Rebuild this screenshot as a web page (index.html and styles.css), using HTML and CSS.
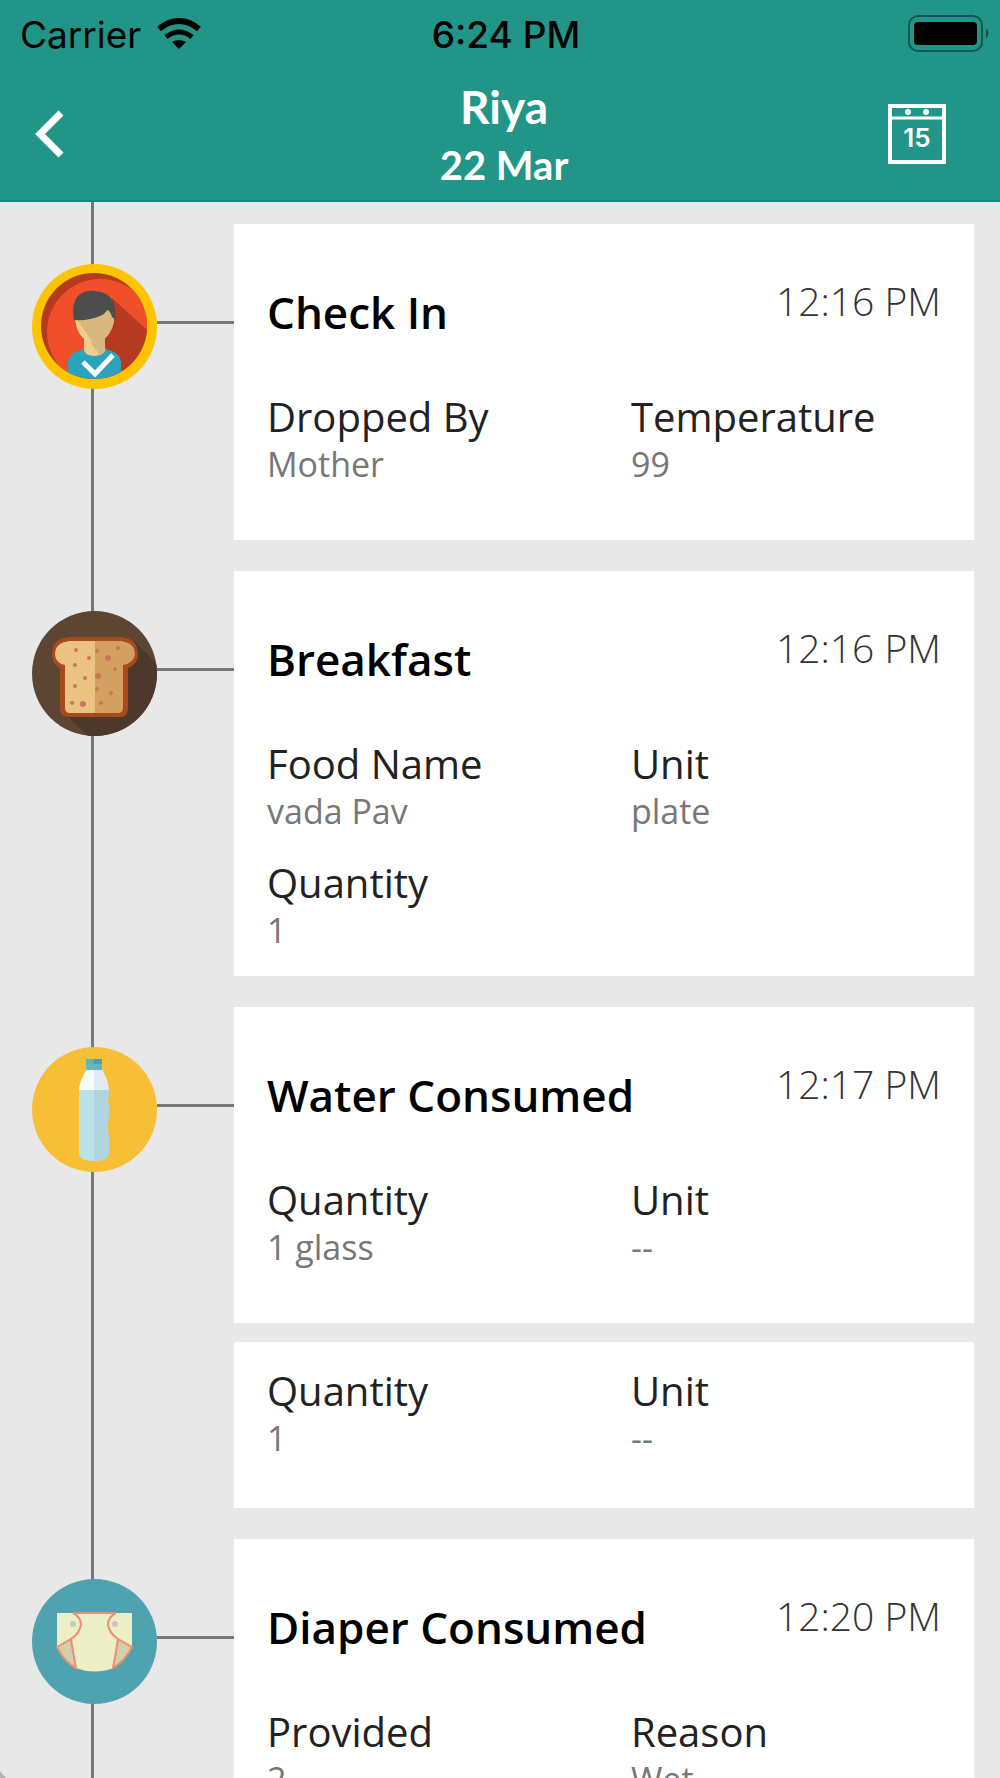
FILE: index.html
```html
<!DOCTYPE html>
<html lang="en">
<head>
    <meta charset="UTF-8">
    <meta name="viewport" content="width=device-width, initial-scale=1.0">
    <title>Riya - 22 Mar</title>
    <link rel="stylesheet" href="styles.css">
</head>
<body>
    <header class="header">
        <div class="status-bar">
            <div class="carrier">
                <span>Carrier</span>
                <svg width="44" height="32" viewBox="0 0 44 32" aria-hidden="true">
                    <path d="M2 11Q22 -5 42 11" fill="none" stroke="#000" stroke-width="6"/>
                    <path d="M9 19Q22 9 35 19" fill="none" stroke="#000" stroke-width="5"/>
                    <path d="M15 24Q22 20 29 24L22 31Z"/>
                </svg>
            </div>
            <span class="clock">6:24 PM</span>
            <div class="battery">
                <svg width="84" height="38" viewBox="0 0 84 38" aria-hidden="true">
                    <rect x="1" y="1" width="73" height="35" rx="9" fill="none" stroke="#10584f" stroke-width="2"/>
                    <rect x="6" y="7" width="63" height="23" rx="4"/>
                    <path d="M78 13Q83 18 78 24Z" fill="#10584f"/>
                </svg>
            </div>
        </div>
        <div class="nav-bar">
            <button class="nav-button" type="button" aria-label="Back">
                <svg width="32" height="52" viewBox="0 0 32 52">
                    <path d="M27 5L6 26L27 47" fill="none" stroke="#fff" stroke-width="7"/>
                </svg>
            </button>
            <h1 class="title">Riya<span class="date">22 Mar</span></h1>
            <button class="nav-button nav-calendar" type="button" aria-label="Choose date">
                <svg width="58" height="60" viewBox="0 0 58 60">
                    <rect x="2" y="2" width="54" height="56" fill="none" stroke="#fff" stroke-width="4"/>
                    <path d="M2 14H56" stroke="#fff" stroke-width="3"/>
                    <circle cx="20" cy="8" r="3" fill="#fff"/>
                    <circle cx="38" cy="8" r="3" fill="#fff"/>
                    <text class="calendar-day" x="29" y="43">15</text>
                </svg>
            </button>
        </div>
    </header>

    <main class="timeline">
        <section class="entry">
            <div class="marker">
                <svg class="marker-icon" viewBox="0 0 125 125" aria-hidden="true">
                    <clipPath id="faceClip"><circle cx="62" cy="62" r="53"/></clipPath>
                    <circle cx="62.500" cy="62.500" r="62.500" fill="#ffc400"/>
                    <g clip-path="url(#faceClip)">
                        <rect width="125" height="125" fill="#b53a20"/>
                        <circle cx="68" cy="68" r="53" fill="#f14f29"/>
                        <path d="M80 34L125 75V125H75L66 80Z" fill="#b53a20"/>
                        <path d="M36 125V98Q37 88 53 85H73Q88 88 89 98V125Z" fill="#2aa3bd"/>
                        <path d="M52 72H73V84Q74 91 62 92Q51 91 52 84Z" fill="#f0cd8a"/>
                        <path d="M54 73L68 91Q75 88 73 82V70Z" fill="#d8b880"/>
                        <path d="M43 50L44 60Q47 73 56 77H69Q79 72 82 58V46H50Z" fill="#d8b880"/>
                        <path d="M43 53L44 61Q47 72 55 77L61 79Z" fill="#f0cd8a"/>
                        <path d="M42 56Q39 38 47 31Q54 26 63 27Q76 28 81 37Q84 44 83 55L80 53Q78 46 75 46Q73 50 68 52Q57 57 42 56Z" fill="#4d4d4d"/>
                        <path d="M51 98L63 110L81 91" fill="none" stroke="#fff" stroke-width="5"/>
                    </g>
                </svg>
                <span class="connector"></span>
            </div>
            <article class="card">
                <div class="card-head">
                    <h2>Check In</h2>
                    <time>12:16 PM</time>
                </div>
                <dl class="details">
                    <div><dt>Dropped By</dt><dd>Mother</dd></div>
                    <div><dt>Temperature</dt><dd>99</dd></div>
                </dl>
            </article>
        </section>

        <section class="entry">
            <div class="marker">
                <svg class="marker-icon" viewBox="0 0 125 125" aria-hidden="true">
                    <clipPath id="toastClip"><circle cx="62.500" cy="62.500" r="62.500"/></clipPath>
                    <clipPath id="breadClip"><path d="M37 30H89Q103 32 103 43Q102 52 91 54V97Q91 102 86 102H38Q33 102 33 97V54Q23 52 23 43Q23 32 37 30Z"/></clipPath>
                    <g clip-path="url(#toastClip)">
                        <rect width="125" height="125" fill="#5c4633"/>
                        <path d="M102 30L130 58V125H56L32 102Z" fill="#4c392b"/>
                    </g>
                    <path d="M37 26H89Q106 28 106 43Q106 53 96 57V97Q96 106 88 106H37Q28 106 28 97V57Q20 53 20 43Q20 28 37 26Z" fill="#a84a1f"/>
                    <g clip-path="url(#breadClip)">
                        <rect width="63" height="125" fill="#ecc283"/>
                        <rect x="63" width="62" height="125" fill="#d3a05f"/>
                    </g>
                    <g fill="#cc7658">
                        <circle cx="44" cy="39" r="2"/><circle cx="57" cy="47" r="2"/>
                        <circle cx="43" cy="54" r="2"/><circle cx="53" cy="67" r="2"/>
                        <circle cx="43" cy="75" r="2"/><circle cx="40" cy="92" r="2"/>
                        <circle cx="51" cy="93" r="3"/><circle cx="65" cy="40" r="2"/>
                        <circle cx="76" cy="47" r="3"/><circle cx="86" cy="37" r="2"/>
                        <circle cx="83" cy="58" r="2"/><circle cx="66" cy="65" r="3"/>
                        <circle cx="65" cy="78" r="2"/><circle cx="79" cy="82" r="2"/>
                        <circle cx="69" cy="92" r="2"/>
                    </g>
                </svg>
                <span class="connector"></span>
            </div>
            <article class="card">
                <div class="card-head">
                    <h2>Breakfast</h2>
                    <time>12:16 PM</time>
                </div>
                <dl class="details">
                    <div><dt>Food Name</dt><dd>vada Pav</dd></div>
                    <div><dt>Unit</dt><dd>plate</dd></div>
                    <div><dt>Quantity</dt><dd>1</dd></div>
                </dl>
            </article>
        </section>

        <section class="entry">
            <div class="marker">
                <svg class="marker-icon" viewBox="0 0 125 125" aria-hidden="true">
                    <circle cx="62.500" cy="62.500" r="62.500" fill="#f6bf35"/>
                    <path d="M55 22H62V44H47Q47 34 55 22Z" fill="#f8fbfc"/>
                    <path d="M62 22H70Q77 34 77 44H62Z" fill="#e3ebf0"/>
                    <path d="M47 43H62V114Q47 114 47 106Z" fill="#b9e3e8"/>
                    <path d="M62 43H77V50Q75 54 77 58V70Q75 80 77 88V106Q77 114 62 114Z" fill="#aed5e0"/>
                    <path d="M54 12H62V23H54Z" fill="#5cb6be"/>
                    <path d="M62 12H70V23H62Z" fill="#479fa9"/>
                    <path d="M54 17H70V23H54Z" fill="#63b8bf"/>
                </svg>
                <span class="connector"></span>
            </div>
            <div class="cards">
                <article class="card">
                    <div class="card-head">
                        <h2>Water Consumed</h2>
                        <time>12:17 PM</time>
                    </div>
                    <dl class="details">
                        <div><dt>Quantity</dt><dd>1 glass</dd></div>
                        <div><dt>Unit</dt><dd>--</dd></div>
                    </dl>
                </article>
                <article class="card card-more">
                    <dl class="details">
                        <div><dt>Quantity</dt><dd>1</dd></div>
                        <div><dt>Unit</dt><dd>--</dd></div>
                    </dl>
                </article>
            </div>
        </section>

        <section class="entry">
            <div class="marker">
                <svg class="marker-icon" viewBox="0 0 125 125" aria-hidden="true">
                    <circle cx="62.500" cy="62.500" r="62.500" fill="#4fa2b0"/>
                    <path d="M25 34H100V68Q93 82 82 89Q62 96 44 89Q33 84 25 68Z" fill="#eceec6"/>
                    <path d="M25 68L39 60Q41 74 44 89Q33 84 25 68Z" fill="#d2cfac" stroke="#ef8c74" stroke-width="2"/>
                    <path d="M100 68L86 60Q84 74 81 89Q93 82 100 68Z" fill="#d2cfac" stroke="#ef8c74" stroke-width="2"/>
                    <path d="M41 34Q49 38 49 46Q47 55 39 60M84 34Q76 38 76 46Q78 55 86 60M41 34H84" fill="none" stroke="#ef8c74" stroke-width="2"/>
                    <circle cx="41" cy="45" r="3" fill="#c3cbb8"/>
                    <circle cx="83" cy="45" r="3" fill="#c3cbb8"/>
                </svg>
                <span class="connector"></span>
            </div>
            <article class="card">
                <div class="card-head">
                    <h2>Diaper Consumed</h2>
                    <time>12:20 PM</time>
                </div>
                <dl class="details">
                    <div><dt>Provided</dt><dd>2</dd></div>
                    <div><dt>Reason</dt><dd>Wet</dd></div>
                </dl>
            </article>
        </section>
    </main>
</body>
</html>
```

FILE: styles.css
```css
* {
    box-sizing: border-box;
}

body {
    display: flex;
    flex-direction: column;
    height: 100vh;
    margin: 0;
    overflow: hidden;
    background-color: #e8e8e8;
    font-family: "Open Sans", "Noto Sans", sans-serif;
    color: #000;
}

h1, h2, dl, dd {
    margin: 0;
}

svg {
    display: block;
}

/* Header */
.header {
    flex: none;
    background-color: #219688;
    border-bottom: 2px solid #009080;
}

.status-bar {
    display: grid;
    grid-template-columns: 1fr auto 1fr;
    align-items: center;
    height: 68px;
    padding: 0 8px 0 20px;
    font-family: Inter, sans-serif;
    font-size: 37px;
}

.carrier {
    display: flex;
    align-items: center;
    gap: 16px;
}

.clock {
    font-weight: 500;
}

.battery {
    justify-self: end;
}

.nav-bar {
    display: grid;
    grid-template-columns: 1fr auto 1fr;
    align-items: center;
    height: 132px;
    padding: 0 26px 0 34px;
}

.nav-button {
    justify-self: start;
    padding: 0;
    border: none;
    background: none;
    cursor: pointer;
}

.nav-calendar {
    justify-self: end;
    padding-right: 28px;
}

.calendar-day {
    fill: #fff;
    font-family: Inter, sans-serif;
    font-size: 26px;
    font-weight: 600;
    text-anchor: middle;
}

.title {
    padding-top: 4px;
    font-family: Lato, "Open Sans", sans-serif;
    font-size: 46px;
    line-height: 58px;
    text-align: center;
    color: #fff;
}

.date {
    display: block;
    font-size: 40px;
}

/* Timeline */
.timeline {
    position: relative;
    flex: 1;
    overflow: hidden;
    padding: 22px 26px 0 0;
}

.timeline::before {
    content: "";
    position: absolute;
    top: 0;
    bottom: 0;
    left: 91px;
    width: 3px;
    background-color: #777;
}

.timeline::after {
    content: "";
    position: absolute;
    bottom: 0;
    left: 0;
    border-left: 6px solid #b4b4b4;
    border-top: 7px solid transparent;
}

.entry {
    display: flex;
    align-items: flex-start;
    margin-bottom: 31px;
}

.marker {
    position: relative;
    display: flex;
    align-items: flex-start;
    flex: none;
    width: 234px;
    padding: 40px 0 0 32px;
}

.marker-icon {
    width: 125px;
    height: 125px;
}

.connector {
    flex: 1;
    height: 3px;
    margin-top: 57px;
    background-color: #777;
}

.cards {
    display: flex;
    flex-direction: column;
    flex: 1;
    gap: 19px;
}

.card {
    flex: 1;
    min-height: 316px;
    padding: 52px 33px 23px;
    background-color: #fff;
}

.card-more {
    min-height: 166px;
    padding-top: 25px;
}

.card-head {
    display: flex;
    justify-content: space-between;
    align-items: flex-start;
    height: 117px;
}

h2 {
    margin-top: 8px;
    font-size: 44px;
    font-weight: 600;
    line-height: 56px;
}

time {
    font-size: 39px;
    font-weight: 300;
    line-height: 50px;
    color: #333;
}

.details {
    display: grid;
    grid-template-columns: 54% 1fr;
    row-gap: 25px;
}

dt {
    font-size: 40px;
    line-height: 48px;
    color: #222;
}

dd {
    font-size: 34px;
    line-height: 46px;
    color: #777;
}
```
